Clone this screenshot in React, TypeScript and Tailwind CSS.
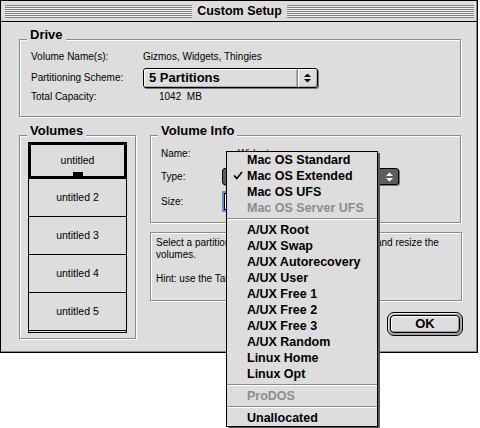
import React from "react";

const Group = ({
  title,
  className,
  children,
}: {
  title: string;
  className?: string;
  children?: React.ReactNode;
}) => (
  <div
    className={`relative border border-[#8a8a8a] shadow-[inset_1px_1px_0_#fff,1px_1px_0_#fff] ${className ?? ""}`}
  >
    <span className="absolute left-[7px] top-[-12px] px-[3px] bg-[#dddddd] text-[13px] leading-[13px] font-bold whitespace-nowrap">
      {title}
    </span>
    {children}
  </div>
);

const Arrows = ({ color }: { color: string }) => (
  <svg width="7" height="10" viewBox="0 0 7 10">
    <path d="M0 4 H7 L3.5 0.5 Z" fill={color} />
    <path d="M0 6 H7 L3.5 9.5 Z" fill={color} />
  </svg>
);

const Stripes = () => (
  <div className="flex-1 h-[13px] bg-[image:repeating-linear-gradient(to_bottom,#7f7f7f_0px,#7f7f7f_1px,#f2f2f2_1px,#f2f2f2_2px)]" />
);

type Item = { label?: string; sep?: boolean; disabled?: boolean; checked?: boolean };

const items: Item[] = [
  { label: "Mac OS Standard" },
  { label: "Mac OS Extended", checked: true },
  { label: "Mac OS UFS" },
  { label: "Mac OS Server UFS", disabled: true },
  { sep: true },
  { label: "A/UX Root" },
  { label: "A/UX Swap" },
  { label: "A/UX Autorecovery" },
  { label: "A/UX User" },
  { label: "A/UX Free 1" },
  { label: "A/UX Free 2" },
  { label: "A/UX Free 3" },
  { label: "A/UX Random" },
  { label: "Linux Home" },
  { label: "Linux Opt" },
  { sep: true },
  { label: "ProDOS", disabled: true },
  { sep: true },
  { label: "Unallocated" },
];

export default function App() {
  return (
    <div className="relative w-[480px] h-[428px] bg-white overflow-hidden font-['Liberation_Sans',Arial,sans-serif] text-black">
      {/* Window */}
      <div className="w-[478px] h-[353px] bg-[#dddddd] border border-black shadow-[inset_-1px_-1px_0_#888] flex flex-col">
        {/* Title bar */}
        <div className="h-[21px] flex items-center pl-[4px] pr-[3px] border-b border-black shrink-0">
          <Stripes />
          <span className="px-[5px] text-[12.5px] leading-[14px] font-bold whitespace-nowrap">
            Custom Setup
          </span>
          <Stripes />
        </div>

        {/* Content */}
        <div className="flex flex-col pl-[18px] pt-[17px]">
          <Group title="Drive" className="w-[442px] h-[78px]">
            <div className="flex flex-col pl-[11px] pt-[10px] text-[10px] leading-[12px]">
              <div className="flex items-center h-[14px]">
                <span className="w-[112px]">Volume Name(s):</span>
                <span>Gizmos, Widgets, Thingies</span>
              </div>
              <div className="flex items-center h-[20px] mt-[4px]">
                <span className="w-[112px]">Partitioning Scheme:</span>
                <div className="w-[175px] h-[20px] flex rounded-[3px] border border-black bg-[#dddddd] shadow-[1px_1px_0_#777]">
                  <div className="flex-1 flex items-center pl-[5px] text-[13px] font-bold rounded-l-[3px] shadow-[inset_1px_1px_0_#fff,inset_-1px_-1px_0_#aaa]">
                    5 Partitions
                  </div>
                  <div className="w-[20px] border-l border-[#8a8a8a] flex items-center justify-center rounded-r-[3px] shadow-[inset_1px_1px_0_#fff,inset_-1px_-1px_0_#aaa]">
                    <Arrows color="#000" />
                  </div>
                </div>
              </div>
              <div className="flex items-center h-[14px] mt-[2px]">
                <span className="w-[128px]">Total Capacity:</span>
                <span className="whitespace-pre">1042  MB</span>
              </div>
            </div>
          </Group>

          <div className="flex gap-[14px] mt-[18px]">
            {/* Volumes */}
            <Group title="Volumes" className="w-[117px] h-[204px]">
              <div className="ml-[8px] mt-[6px] w-[99px] h-[191px] border border-black flex flex-col text-[10.5px]">
                <div className="relative h-[36px] border-b border-black flex items-center justify-center">
                  <div className="absolute left-[-1px] right-[-1px] top-[-1px] bottom-[-1px] border-[3px] border-black">
                    <div className="absolute bottom-0 left-1/2 -translate-x-1/2 w-[10px] h-[4px] bg-black" />
                  </div>
                  untitled
                </div>
                {["untitled 2", "untitled 3", "untitled 4", "untitled 5"].map((v) => (
                  <div key={v} className="h-[38px] border-b border-black flex items-center justify-center">
                    {v}
                  </div>
                ))}
              </div>
            </Group>

            {/* Right column */}
            <div className="w-[313px] flex flex-col">
              <Group title="Volume Info" className="w-[311px] h-[88px]">
                <div className="flex flex-col pl-[10px] pt-[11px] text-[10px] leading-[12px]">
                  <div className="flex items-center h-[14px]">
                    <span className="w-[61px]">Name:</span>
                    <span className="pl-[16px]">Widgets</span>
                  </div>
                  <div className="flex items-center h-[17px] mt-[7px]">
                    <span className="w-[61px]">Type:</span>
                    <div className="w-[177px] h-[17px] flex rounded-[3px] border border-black bg-[#5e5e5e] shadow-[1px_1px_0_#777]">
                      <div className="flex-1" />
                      <div className="w-[18px] flex items-center justify-center">
                        <Arrows color="#fff" />
                      </div>
                    </div>
                  </div>
                  <div className="flex items-center h-[21px] mt-[6px]">
                    <span className="w-[61px]">Size:</span>
                    <div className="w-[70px] h-[21px] border-2 border-[#7086c2] rounded-[1px]">
                      <div className="w-full h-full border border-black bg-white" />
                    </div>
                  </div>
                </div>
              </Group>

              <div className="mt-[9px] w-[312px] h-[69px] border border-[#8a8a8a] shadow-[inset_1px_1px_0_#fff,1px_1px_0_#fff] pl-[5px] pt-[4px] text-[10px] leading-[12px]">
                <div className="whitespace-nowrap">
                  Select a partition in the Volumes box. Then move and resize the
                </div>
                <div>volumes.</div>
                <div className="h-[12px]" />
                <div className="whitespace-nowrap">Hint: use the Tab key to move between fields.</div>
              </div>

              <div className="mt-[11px] self-end w-[76px] h-[24px] rounded-[7px] border border-black bg-[#a8a8a8] p-[2px] shadow-[inset_1px_1px_0_#e8e8e8]">
                <div className="w-full h-full rounded-[4px] border border-black bg-[#dddddd] shadow-[inset_1px_1px_0_#fff,inset_-1px_-1px_0_#999] flex items-center justify-center text-[13px] font-bold">
                  OK
                </div>
              </div>
            </div>
          </div>
        </div>
      </div>

      {/* Pop-up menu */}
      <div className="absolute left-[226px] top-[151px] w-[152px] h-[276px] bg-[#dddddd] border border-black shadow-[2px_2px_0_#5a5a5a] flex flex-col">
        {items.map((it, i) =>
          it.sep ? (
            <div key={i} className="h-[6px] flex flex-col justify-center">
              <div className="h-[1px] bg-[#8a8a8a]" />
              <div className="h-[1px] bg-white" />
            </div>
          ) : (
            <div
              key={i}
              className={`relative h-[16px] flex items-center pl-[20px] text-[12.5px] leading-[14px] font-bold whitespace-nowrap ${
                it.disabled ? "text-[#8c8c8c]" : "text-black"
              }`}
            >
              {it.checked && (
                <svg className="absolute left-[6px] top-[3px]" width="10" height="9" viewBox="0 0 10 9">
                  <path d="M1 4.5 L3.8 7.5 L9 1" stroke="#000" strokeWidth="1.6" fill="none" />
                </svg>
              )}
              {it.label}
            </div>
          )
        )}
      </div>
    </div>
  );
}
